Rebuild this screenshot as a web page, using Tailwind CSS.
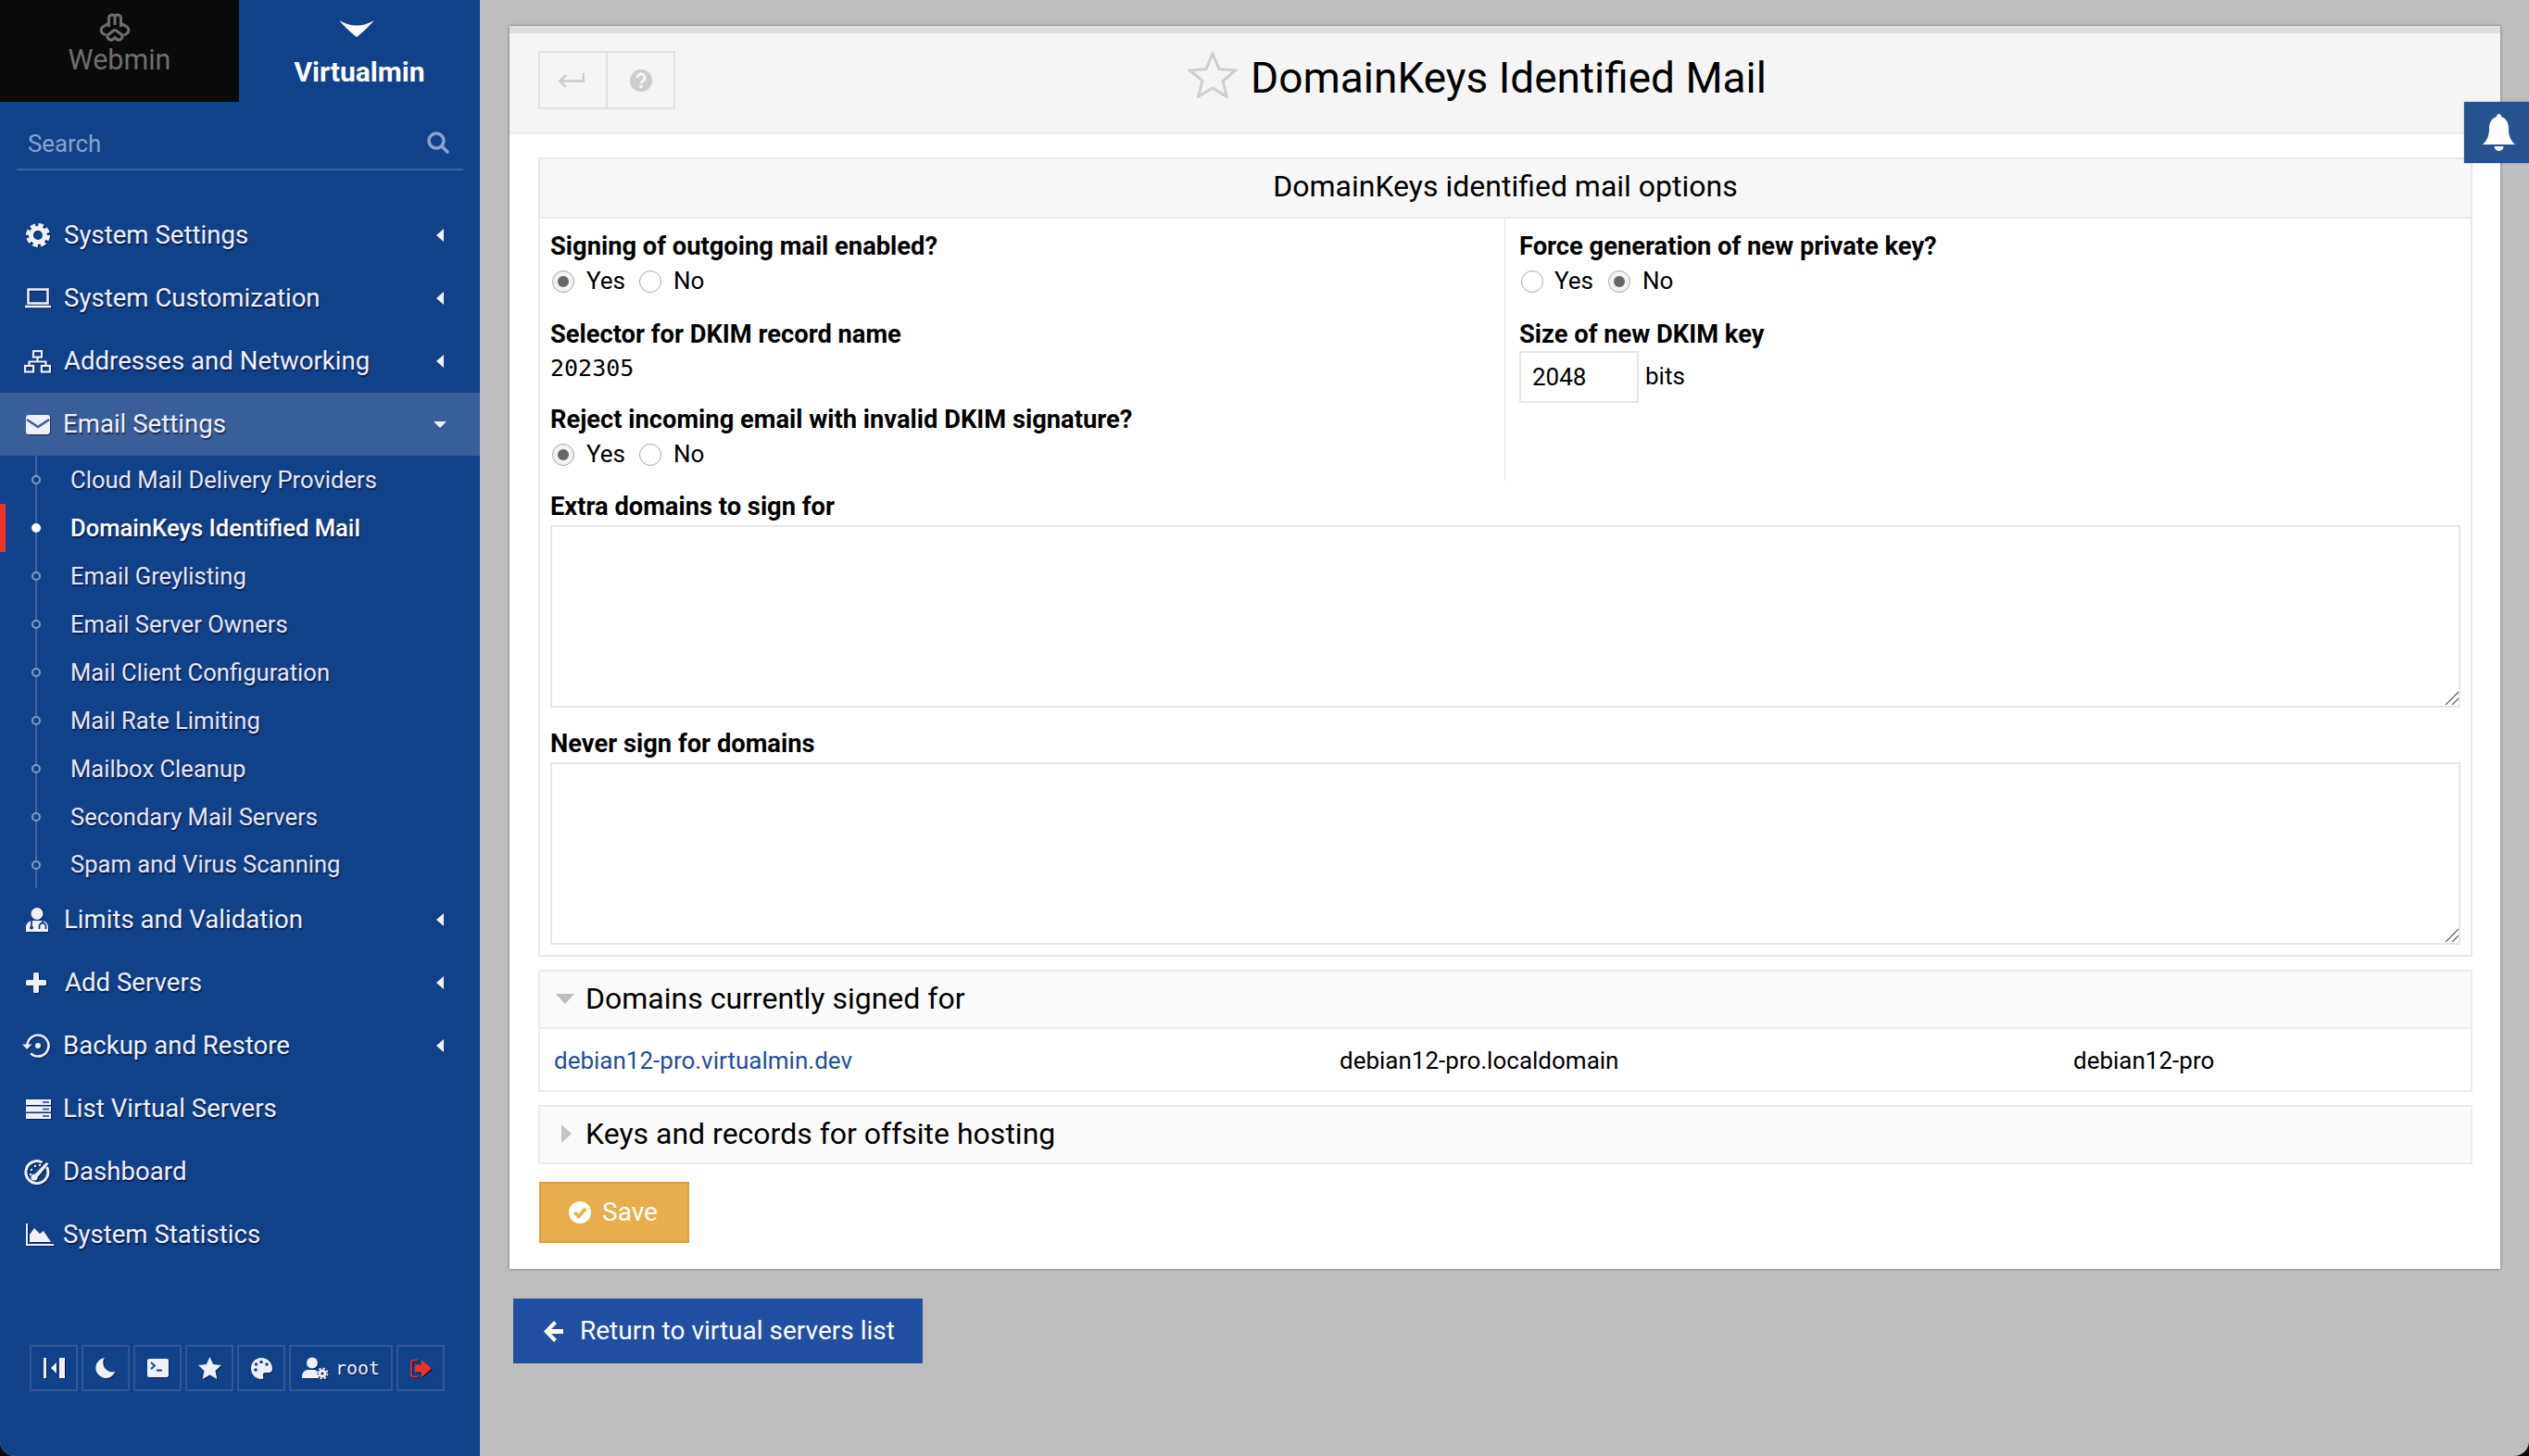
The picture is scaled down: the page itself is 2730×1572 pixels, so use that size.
<!DOCTYPE html>
<html lang="en">
<head>
<meta charset="utf-8">
<title>DomainKeys Identified Mail</title>
<script src="https://cdn.jsdelivr.net/npm/@tailwindcss/browser@4"></script>
</head>
<body class="bg-[#0a0a12] [font-family:Roboto,sans-serif]">
<div class="relative flex h-[1572px] w-[2730px] overflow-hidden rounded-b-[16px] bg-[#bebebe]">

  <!-- sidebar -->
  <aside class="relative flex h-full w-[518px] shrink-0 flex-col bg-[#10428a] text-[#eff0fa]">
    <div class="flex h-[110px] shrink-0">
      <div class="flex w-[258px] flex-col items-center bg-[#0a0a0a] pt-[12px] text-[#6e6e6e]">
        <svg class="mr-[10px] h-[34px] w-[36px]" viewBox="0 0 36 34" fill="none" stroke="currentColor" stroke-width="3">
          <path d="M11.500 17V7.500a3.600 3.600 0 0 1 6.500-2 3.600 3.600 0 0 1 6.500 2V17M18 6v9"/>
          <path d="M11.500 13 5 17a4.400 4.400 0 0 0 .5 7.500L8 26M18 20l-8 6a4 4 0 0 0 7 3.500l1-1 1 1a4 4 0 0 0 7-3.500l-8-6M24.500 13l6.500 4a4.400 4.400 0 0 1-.5 7.500L28 26"/>
        </svg>
        <span class="mt-[1px] text-[30.5px] leading-[36px]">Webmin</span>
      </div>
      <div class="flex flex-1 flex-col items-center pt-[22px] text-white">
        <svg class="mr-[6px] h-[18px] w-[38px]" viewBox="0 0 38 18" fill="currentColor"><path d="M0 0Q19 11 38 0 27 12 19 18 11 12 0 0Z"/></svg>
        <span class="mt-[20px] text-[30px] leading-[36px] font-bold">Virtualmin</span>
      </div>
    </div>

    <div class="mx-[18px] flex h-[74px] shrink-0 items-center justify-between border-b-2 border-[#3a62a0] pt-[18px] pr-[15px] pl-[12px] text-[25.8px] text-[#8aa3cc]">
      <span>Search</span>
      <svg class="-mt-[2px] h-[24px] w-[24px]" viewBox="0 0 24 24" fill="none" stroke="currentColor" stroke-width="3.500"><circle cx="10" cy="10" r="8"/><path d="m16 16 6 6" stroke-linecap="round"/></svg>
    </div>

    <nav class="mt-[36px] flex flex-col text-[27.6px] [text-shadow:1px_2px_1px_rgba(0,0,30,.55)]">
      <a class="flex h-[68px] items-center pr-[39px] pl-[28px]">
        <svg class="h-[26px] w-[26px] shrink-0 drop-shadow-[1px_1px_0_rgba(0,0,30,.5)]" viewBox="0 0 26 26" fill="none" stroke="currentColor"><circle cx="13" cy="13" r="7.500" stroke-width="5"/><circle cx="13" cy="13" r="11" stroke-width="4" stroke-dasharray="5.600 3.040"/></svg>
        <span class="ml-[15px] flex-1">System Settings</span>
        <span class="h-0 w-0 border-y-[7px] border-r-[8px] border-y-transparent border-r-[#eff0fa]"></span>
      </a>
      <a class="flex h-[68px] items-center pr-[39px] pl-[27px]">
        <svg class="h-[22px] w-[28px] shrink-0 drop-shadow-[1px_1px_0_rgba(0,0,30,.5)]" viewBox="0 0 28 22" fill="none" stroke="currentColor" stroke-width="2.500"><rect x="3.500" y="1.500" width="21" height="15"/><path d="M0 20h28"/></svg>
        <span class="ml-[14px] flex-1">System Customization</span>
        <span class="h-0 w-0 border-y-[7px] border-r-[8px] border-y-transparent border-r-[#eff0fa]"></span>
      </a>
      <a class="flex h-[68px] items-center pr-[39px] pl-[26px]">
        <svg class="h-[25px] w-[29px] shrink-0 drop-shadow-[1px_1px_0_rgba(0,0,30,.5)]" viewBox="0 0 29 25" fill="none" stroke="currentColor" stroke-width="2.200"><rect x="10" y="1.100" width="9" height="6.500"/><rect x="1.100" y="17" width="9" height="6.500"/><rect x="18.900" y="17" width="9" height="6.500"/><path d="M14.500 8v4.500M5.500 17v-4.500h18V17"/></svg>
        <span class="ml-[14px] flex-1">Addresses and Networking</span>
        <span class="h-0 w-0 border-y-[7px] border-r-[8px] border-y-transparent border-r-[#eff0fa]"></span>
      </a>
      <a class="flex h-[68px] items-center bg-[#395f9b] pr-[36px] pl-[28px]">
        <svg class="h-[21px] w-[26px] shrink-0 drop-shadow-[1px_1px_0_rgba(0,0,30,.5)]" viewBox="0 0 26 21"><rect width="26" height="21" rx="3" fill="currentColor"/><path d="m1 5 12 8 12-8" fill="none" stroke="#395f9b" stroke-width="2.500"/></svg>
        <span class="ml-[14px] flex-1">Email Settings</span>
        <span class="h-0 w-0 border-x-[7px] border-t-[7px] border-x-transparent border-t-[#eff0fa]"></span>
      </a>

      <div class="relative flex h-[467px] flex-col text-[25.6px] text-[#e6e7f6]">
        <span class="absolute top-0 bottom-0 left-[38px] w-[2px] bg-[#3f66a2]"></span>
        <span class="absolute top-[52px] left-0 h-[52px] w-[6px] bg-[#f03224]"></span>
        <a class="relative flex h-[52px] items-center pl-[76px]"><span class="absolute left-[34px] h-[10px] w-[10px] rounded-full border-2 border-[#7f9ac4] bg-[#10428a]"></span>Cloud Mail Delivery Providers</a>
        <a class="relative flex h-[52px] items-center pl-[76px] font-medium text-white"><span class="absolute left-[34px] h-[10px] w-[10px] rounded-full bg-white"></span>DomainKeys Identified Mail</a>
        <a class="relative flex h-[52px] items-center pl-[76px]"><span class="absolute left-[34px] h-[10px] w-[10px] rounded-full border-2 border-[#7f9ac4] bg-[#10428a]"></span>Email Greylisting</a>
        <a class="relative flex h-[52px] items-center pl-[76px]"><span class="absolute left-[34px] h-[10px] w-[10px] rounded-full border-2 border-[#7f9ac4] bg-[#10428a]"></span>Email Server Owners</a>
        <a class="relative flex h-[52px] items-center pl-[76px]"><span class="absolute left-[34px] h-[10px] w-[10px] rounded-full border-2 border-[#7f9ac4] bg-[#10428a]"></span>Mail Client Configuration</a>
        <a class="relative flex h-[52px] items-center pl-[76px]"><span class="absolute left-[34px] h-[10px] w-[10px] rounded-full border-2 border-[#7f9ac4] bg-[#10428a]"></span>Mail Rate Limiting</a>
        <a class="relative flex h-[52px] items-center pl-[76px]"><span class="absolute left-[34px] h-[10px] w-[10px] rounded-full border-2 border-[#7f9ac4] bg-[#10428a]"></span>Mailbox Cleanup</a>
        <a class="relative flex h-[52px] items-center pl-[76px]"><span class="absolute left-[34px] h-[10px] w-[10px] rounded-full border-2 border-[#7f9ac4] bg-[#10428a]"></span>Secondary Mail Servers</a>
        <a class="relative flex h-[51px] items-center pl-[76px]"><span class="absolute left-[34px] h-[10px] w-[10px] rounded-full border-2 border-[#7f9ac4] bg-[#10428a]"></span>Spam and Virus Scanning</a>
      </div>

      <a class="flex h-[68px] items-center pr-[39px] pl-[27px]">
        <svg class="h-[26px] w-[26px] shrink-0 drop-shadow-[1px_1px_0_rgba(0,0,30,.5)]" viewBox="0 0 26 26"><circle cx="13" cy="6.500" r="6.500" fill="currentColor"/><path d="M1 26v-6a7 7 0 0 1 7-6h10a7 7 0 0 1 7 6v6Z" fill="currentColor"/><path d="M7 14v6M19 14v3M15.500 23v-3a3.500 3.500 0 0 1 7 0v3" fill="none" stroke="#10428a" stroke-width="1.800"/><circle cx="7" cy="21.500" r="2" fill="#10428a"/></svg>
        <span class="ml-[16px] flex-1">Limits and Validation</span>
        <span class="h-0 w-0 border-y-[7px] border-r-[8px] border-y-transparent border-r-[#eff0fa]"></span>
      </a>
      <a class="flex h-[68px] items-center pr-[39px] pl-[28px]">
        <svg class="h-[22px] w-[22px] shrink-0 drop-shadow-[1px_1px_0_rgba(0,0,30,.5)]" viewBox="0 0 22 22" fill="currentColor"><rect y="8" width="22" height="6" rx="1.500"/><rect x="8" width="6" height="22" rx="1.500"/></svg>
        <span class="ml-[20px] flex-1">Add Servers</span>
        <span class="h-0 w-0 border-y-[7px] border-r-[8px] border-y-transparent border-r-[#eff0fa]"></span>
      </a>
      <a class="flex h-[68px] items-center pr-[39px] pl-[24px]">
        <svg class="h-[26px] w-[30px] shrink-0 drop-shadow-[1px_1px_0_rgba(0,0,30,.5)]" viewBox="0 0 30 26" fill="none" stroke="currentColor" stroke-width="2.600"><path d="M5.500 13a11.500 11.500 0 1 1 3.600 8.400"/><path d="M0 11.500h10.500L5.200 17Z" fill="currentColor" stroke="none"/><circle cx="17" cy="13" r="3" fill="currentColor" stroke="none"/></svg>
        <span class="ml-[14px] flex-1">Backup and Restore</span>
        <span class="h-0 w-0 border-y-[7px] border-r-[8px] border-y-transparent border-r-[#eff0fa]"></span>
      </a>
      <a class="flex h-[68px] items-center pr-[39px] pl-[28px]">
        <svg class="h-[21px] w-[27px] shrink-0 drop-shadow-[1px_1px_0_rgba(0,0,30,.5)]" viewBox="0 0 27 21"><rect width="27" height="6" fill="currentColor"/><rect y="7.500" width="27" height="6" fill="currentColor"/><rect y="15" width="27" height="6" fill="currentColor"/><path d="M18 3h7M18 10.500h7M18 18h7" stroke="#10428a" stroke-width="1.500"/></svg>
        <span class="ml-[13px] flex-1">List Virtual Servers</span>
      </a>
      <a class="flex h-[68px] items-center pr-[39px] pl-[26px]">
        <svg class="h-[27px] w-[28px] shrink-0 drop-shadow-[1px_1px_0_rgba(0,0,30,.5)]" viewBox="0 0 28 27" fill="none" stroke="currentColor"><path d="M24.500 8A12 12 0 1 1 19.500 3" stroke-width="3"/><path d="M9 18.500 24 3l2.500 1.500L13 21Z" fill="currentColor" stroke="none"/><circle cx="11" cy="19" r="3.500" fill="currentColor" stroke="none"/><path d="M6 16h2M7 11h2M11 7h2M16 6h2" stroke-width="2"/></svg>
        <span class="ml-[14px] flex-1">Dashboard</span>
      </a>
      <a class="flex h-[68px] items-center pr-[39px] pl-[28px]">
        <svg class="h-[24px] w-[30px] shrink-0 drop-shadow-[1px_1px_0_rgba(0,0,30,.5)]" viewBox="0 0 30 24"><path d="M1 0v23h29" fill="none" stroke="currentColor" stroke-width="2"/><path d="M4 20V12l5-7 6 6 4-3 8 12Z" fill="currentColor"/></svg>
        <span class="ml-[10px] flex-1">System Statistics</span>
      </a>
    </nav>

    <div class="mt-auto mb-[70px] flex gap-[4px] pl-[32px] text-[#eff0fa]">
      <span class="flex h-[50px] w-[52px] items-center justify-center border-2 border-[#2f5895]"><svg class="h-[22px] w-[23px] drop-shadow-[1px_1px_0_rgba(0,0,30,.6)]" viewBox="0 0 23 22" fill="currentColor"><rect width="3" height="22"/><rect x="17" width="6" height="22"/><path d="M8 11l6-6v12Z"/></svg></span>
      <span class="flex h-[50px] w-[52px] items-center justify-center border-2 border-[#2f5895]"><svg class="h-[22px] w-[22px] drop-shadow-[1px_1px_0_rgba(0,0,30,.6)]" viewBox="0 0 22 22" fill="currentColor"><path d="M10 0a11 11 0 1 0 11.500 15c-6 1.500-12-2-13-8-.5-3 0-5 1.500-7Z"/></svg></span>
      <span class="flex h-[50px] w-[52px] items-center justify-center border-2 border-[#2f5895]"><svg class="h-[20px] w-[23px] drop-shadow-[1px_1px_0_rgba(0,0,30,.6)]" viewBox="0 0 23 20"><rect width="23" height="20" rx="2" fill="currentColor"/><path d="m4 4 4 3.500L4 11M10 12.500h6" fill="none" stroke="#10428a" stroke-width="1.800"/></svg></span>
      <span class="flex h-[50px] w-[52px] items-center justify-center border-2 border-[#2f5895]"><svg class="h-[24px] w-[25px] drop-shadow-[1px_1px_0_rgba(0,0,30,.6)]" viewBox="0 0 25 24" fill="currentColor"><path d="m12.500 0 3.700 8 8.800 1-6.500 6 1.800 9-7.800-4.500L4.700 24l1.800-9L0 9l8.800-1Z"/></svg></span>
      <span class="flex h-[50px] w-[52px] items-center justify-center border-2 border-[#2f5895]"><svg class="h-[23px] w-[23px] drop-shadow-[1px_1px_0_rgba(0,0,30,.6)]" viewBox="0 0 23 23"><path d="M11 0C5 0 0 5 0 11.500S5 23 11 23c3 0 2.500-2 2-3.500-.5-2 .5-3.500 2.500-3.500H19c2.500 0 4-1.500 4-4C23 5 18 0 11 0Z" fill="currentColor"/><g fill="#10428a"><circle cx="5" cy="13" r="1.800"/><circle cx="5.500" cy="7" r="1.800"/><circle cx="11" cy="4.500" r="1.800"/><circle cx="17" cy="7" r="1.800"/></g></svg></span>
      <span class="flex h-[50px] w-[112px] items-center border-2 border-[#2f5895] pl-[12px] [font-family:'DejaVu_Sans_Mono',monospace] text-[20px] [text-shadow:1px_1px_0_rgba(0,0,30,.6)]"><svg class="h-[24px] w-[29px] shrink-0 drop-shadow-[1px_1px_0_rgba(0,0,30,.6)]" viewBox="0 0 29 24"><circle cx="11" cy="6.500" r="6" fill="currentColor"/><path d="M0 23v-3a6.500 6.500 0 0 1 6-6h9l3 9Z" fill="currentColor"/><circle cx="22" cy="18" r="3" fill="none" stroke="currentColor" stroke-width="3"/><circle cx="22" cy="18" r="5.500" fill="none" stroke="currentColor" stroke-width="2" stroke-dasharray="2.300 2"/></svg><span class="ml-[7px]">root</span></span>
      <span class="flex h-[50px] w-[52px] items-center justify-center border-2 border-[#2f5895]"><svg class="h-[21px] w-[23px] drop-shadow-[1px_1px_0_rgba(0,0,30,.6)]" viewBox="0 0 23 21"><path d="M8 1.500H4a3 3 0 0 0-3 3v12a3 3 0 0 0 3 3h4" fill="none" stroke="#f03224" stroke-width="1.600"/><path d="M5 6.500h7V1l11 9.500L12 20v-5.500H5Z" fill="#f03224"/></svg></span>
    </div>
  </aside>

  <!-- main -->
  <main class="flex-1 pt-[28px] pl-[32px] text-[26px] text-black">
    <section class="flex h-[1342px] w-[2149px] flex-col bg-white shadow-[0_0_3px_rgba(0,0,0,.45)]">
      <div class="h-[8px] shrink-0 bg-[#dedede]"></div>
      <header class="relative flex h-[109px] shrink-0 items-start justify-center border-b-2 border-[#eeeeee] bg-[#f5f5f5]">
        <div class="absolute top-[19px] left-[31px] flex h-[63px] w-[148px] border-2 border-[#e2e2e2]">
          <span class="flex w-[73px] items-center justify-center border-r-2 border-[#e2e2e2] pr-[3px]"><svg class="h-[16px] w-[28px]" viewBox="0 0 28 16" fill="none" stroke="#c9c9c9" stroke-width="2.400"><path d="M27 0v8.500H2M8 2 1.500 8.500 8 15"/></svg></span>
          <span class="flex flex-1 items-center justify-center"><svg class="h-[24px] w-[24px]" viewBox="0 0 24 24"><circle cx="12" cy="12" r="12" fill="#cdcdcd"/><path d="M8 9a4 4 0 1 1 6.500 3c-1.500 1-2.500 1.500-2.500 3" fill="none" stroke="#f5f5f5" stroke-width="3"/><rect x="10.300" y="16.800" width="3.400" height="3.400" fill="#f5f5f5"/></svg></span>
        </div>
        <div class="mt-[14px] mr-[60px] flex items-start">
          <svg class="mt-[4px] mr-[14px] h-[52px] w-[54px]" viewBox="0 0 54 52" fill="none" stroke="#cfcfcf" stroke-width="3"><path d="m27 4 7 16.500 17.500 1.500-13.300 11.500 4 17L27 41l-15.200 9 4-17L2.500 22 20 20.500Z"/></svg>
          <h1 class="mt-[4px] text-[46px] leading-[60px] font-normal">DomainKeys Identified Mail</h1>
        </div>
      </header>

      <div class="flex-1 pt-[25px] pr-[30px] pl-[31px]">
        <div class="flex h-[863px] flex-col border-2 border-[#e8e8e8]">
          <div class="flex h-[64px] shrink-0 items-center justify-center border-b-2 border-[#e8e8e8] bg-[#f7f7f7] pb-[5px] text-[32px]">DomainKeys identified mail options</div>
          <div class="flex h-[283px] shrink-0">
            <div class="w-[1042px] border-r border-[#e5e5e5] pt-[12px] pl-[11px]">
              <div class="h-[93.500px]">
                <div class="flex h-[37px] items-center text-[27.3px] font-bold">Signing of outgoing mail enabled?</div>
                <div class="flex h-[37px] items-center">
                  <span class="ml-[2px] flex h-[24px] w-[24px] items-center justify-center rounded-full border border-[#aaaaaa] bg-[#f2f2f2]"><span class="h-[12px] w-[12px] rounded-full bg-[#666666]"></span></span><span class="ml-[13px]">Yes</span>
                  <span class="ml-[15px] h-[24px] w-[24px] rounded-full border border-[#aaaaaa]"></span><span class="ml-[13px]">No</span>
                </div>
              </div>
              <div class="h-[93.500px]">
                <div class="flex h-[37px] items-center pt-[2px] text-[27.3px] font-bold">Selector for DKIM record name</div>
                <div class="flex h-[37px] items-center pt-[1px] [font-family:'DejaVu_Sans_Mono',monospace] text-[25px]">202305</div>
              </div>
              <div>
                <div class="flex h-[37px] items-center text-[27.3px] font-bold">Reject incoming email with invalid DKIM signature?</div>
                <div class="flex h-[37px] items-center">
                  <span class="ml-[2px] flex h-[24px] w-[24px] items-center justify-center rounded-full border border-[#aaaaaa] bg-[#f2f2f2]"><span class="h-[12px] w-[12px] rounded-full bg-[#666666]"></span></span><span class="ml-[13px]">Yes</span>
                  <span class="ml-[15px] h-[24px] w-[24px] rounded-full border border-[#aaaaaa]"></span><span class="ml-[13px]">No</span>
                </div>
              </div>
            </div>
            <div class="flex-1 pt-[12px] pl-[15px]">
              <div class="h-[93.500px]">
                <div class="flex h-[37px] items-center text-[27.3px] font-bold">Force generation of new private key?</div>
                <div class="flex h-[37px] items-center">
                  <span class="ml-[2px] h-[24px] w-[24px] rounded-full border border-[#aaaaaa]"></span><span class="ml-[12px]">Yes</span>
                  <span class="ml-[16px] flex h-[24px] w-[24px] items-center justify-center rounded-full border border-[#aaaaaa] bg-[#f2f2f2]"><span class="h-[12px] w-[12px] rounded-full bg-[#666666]"></span></span><span class="ml-[13px]">No</span>
                </div>
              </div>
              <div>
                <div class="flex h-[37px] items-center pt-[2px] text-[27.3px] font-bold">Size of new DKIM key</div>
                <div class="flex items-center">
                  <input class="h-[56px] w-[129px] border-2 border-[#e6e6e6] pl-[12px] outline-none" value="2048">
                  <span class="ml-[7px]">bits</span>
                </div>
              </div>
            </div>
          </div>
          <div class="px-[11px] pt-[9px]">
            <div class="flex h-[38px] items-center text-[27.3px] font-bold">Extra domains to sign for</div>
            <div class="relative mt-[1px]">
              <textarea class="block h-[197px] w-full resize-none border-2 border-[#e6e6e6] outline-none"></textarea>
              <svg class="absolute right-[2px] bottom-[3px] h-[15px] w-[15px]" viewBox="0 0 15 15" fill="none" stroke="#666666" stroke-width="1.300"><path d="M1 15 15 1M8 15l7-7"/></svg>
            </div>
            <div class="mt-[20px] flex h-[38px] items-center text-[27.3px] font-bold">Never sign for domains</div>
            <div class="relative mt-[1px]">
              <textarea class="block h-[197px] w-full resize-none border-2 border-[#e6e6e6] outline-none"></textarea>
              <svg class="absolute right-[2px] bottom-[3px] h-[15px] w-[15px]" viewBox="0 0 15 15" fill="none" stroke="#666666" stroke-width="1.300"><path d="M1 15 15 1M8 15l7-7"/></svg>
            </div>
          </div>
        </div>

        <div class="mt-[14px] h-[132px] border-2 border-[#ececec]">
          <div class="flex h-[62px] items-center border-b-2 border-[#ececec] bg-[#fafafa] pb-[2px] text-[32px]">
            <span class="ml-[17px] h-0 w-0 border-x-[10px] border-t-[11px] border-x-transparent border-t-[#bdbdbd]"></span>
            <span class="ml-[12px]">Domains currently signed for</span>
          </div>
          <div class="flex h-[66px] items-center pt-[2px]">
            <a class="ml-[15px] w-[848px] text-[#1d4f9f]">debian12-pro.virtualmin.dev</a>
            <span class="w-[792px]">debian12-pro.localdomain</span>
            <span>debian12-pro</span>
          </div>
        </div>

        <div class="mt-[14px] flex h-[64px] items-center border-2 border-[#ececec] bg-[#fafafa] pb-[2px] text-[32px]">
          <span class="ml-[23px] h-0 w-0 border-y-[10px] border-l-[11px] border-y-transparent border-l-[#c4c4c4]"></span>
          <span class="ml-[15px]">Keys and records for offsite hosting</span>
        </div>

        <button class="mt-[19px] ml-[1px] flex h-[66px] w-[162px] items-center border-2 border-[#d8a043] bg-[#e8ae4d] pl-[30px] text-[28px] text-white">
          <svg class="h-[24px] w-[24px]" viewBox="0 0 24 24"><circle cx="12" cy="12" r="12" fill="#ffffff"/><path d="m6.500 12 4 4.500L18 8" fill="none" stroke="#e8ae4d" stroke-width="3.600"/></svg>
          <span class="ml-[12px]">Save</span>
        </button>
      </div>
    </section>

    <button class="mt-[32px] ml-[4px] flex h-[70px] w-[442px] items-center border-2 border-[#23509b] bg-[#2150a2] pl-[30px] text-[28px] text-white">
      <svg class="h-[23px] w-[22px]" viewBox="0 0 22 23" fill="currentColor"><path d="M12 0 1 11.500 12 23l3-3-6-6h13V9H9l6-6Z"/></svg>
      <span class="ml-[18px]">Return to virtual servers list</span>
    </button>
  </main>

  <!-- notification tab -->
  <div class="absolute top-[110px] right-0 flex h-[66px] w-[70px] items-center justify-end bg-[#26528f] pr-[15px] shadow-[0_0_2px_rgba(0,0,0,.3)]">
    <svg class="h-[40px] w-[35px]" viewBox="0 0 35 40" fill="#ffffff"><path d="M17.500 0c1.500 0 2.500 1 2.500 3 6 2 8 7 8 13 0 9 3 13 7 17H0c4-4 7-8 7-17 0-6 2-11 8-13 0-2 1-3 2.500-3Z"/><path d="M12.500 35h10a5 5 0 0 1-10 0Z"/></svg>
  </div>
</div>
</body>
</html>
